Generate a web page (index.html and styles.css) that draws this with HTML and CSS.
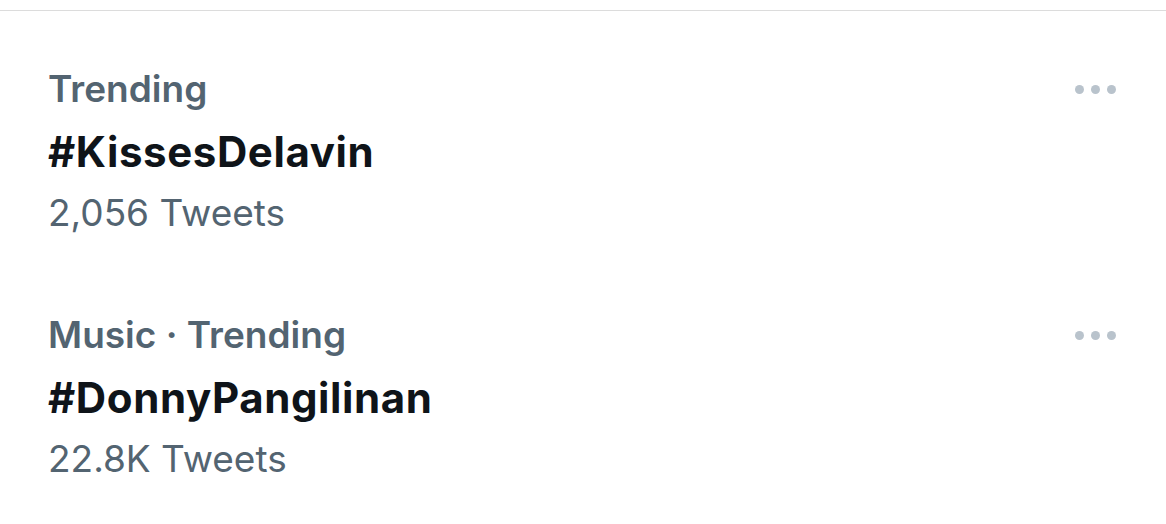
FILE: index.html
```html
<!DOCTYPE html>
<html lang="en">
<head>
    <meta charset="UTF-8">
    <meta name="viewport" content="width=device-width, initial-scale=1.0">
    <title>Trends</title>
    <link rel="stylesheet" href="styles.css">
</head>
<body>
    <div class="trends">
        <!-- Trend 1 -->
        <div class="trend">
            <div class="trend-text">
                <div class="trend-label">Trending</div>
                <div class="trend-title">#KissesDelavin</div>
                <div class="trend-count">2,056 Tweets</div>
            </div>
            <div class="trend-more">
                <svg width="41" height="9" viewBox="0 0 41 9">
                    <circle cx="4.5" cy="4.5" r="4.5"></circle>
                    <circle cx="20.5" cy="4.5" r="4.5"></circle>
                    <circle cx="36.5" cy="4.5" r="4.5"></circle>
                </svg>
            </div>
        </div>

        <!-- Trend 2 -->
        <div class="trend">
            <div class="trend-text">
                <div class="trend-label">Music · Trending</div>
                <div class="trend-title">#DonnyPangilinan</div>
                <div class="trend-count">22.8K Tweets</div>
            </div>
            <div class="trend-more">
                <svg width="41" height="9" viewBox="0 0 41 9">
                    <circle cx="4.5" cy="4.5" r="4.5"></circle>
                    <circle cx="20.5" cy="4.5" r="4.5"></circle>
                    <circle cx="36.5" cy="4.5" r="4.5"></circle>
                </svg>
            </div>
        </div>
    </div>
</body>
</html>
```

FILE: styles.css
```css
/* General Reset */
* {
    margin: 0;
    padding: 0;
    box-sizing: border-box;
}

body {
    font-family: Inter, "Noto Sans", sans-serif;
    background-color: #ffffff;
    color: #0f1419;
    padding-top: 10px;
    overflow: hidden;
}

.trends {
    border-top: 1px solid #dcdcdc;
}

/* One trend row */
.trend {
    display: flex;
    justify-content: space-between;
    align-items: flex-start;
    padding: 56px 50px 22px 48px;
}

.trend-label {
    font-size: 37px;
    line-height: 44px;
    font-weight: 600;
    color: #536471;
}

.trend-title {
    font-size: 42px;
    line-height: 50px;
    font-weight: 700;
    letter-spacing: 0.6px;
    color: #0f1419;
    margin-top: 16px;
}

.trend-count {
    font-size: 37px;
    line-height: 44px;
    font-weight: 400;
    color: #536471;
    margin-top: 14px;
}

.trend-more {
    height: 44px;
    display: flex;
    align-items: center;
}

.trend-more svg {
    fill: #b9c3cc;
    display: block;
}
```
